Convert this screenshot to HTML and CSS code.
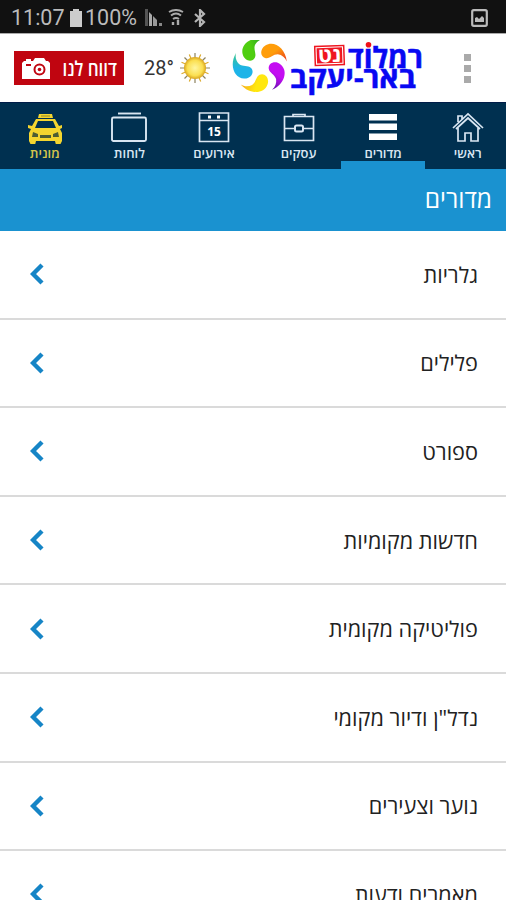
FILE: index.html
```
<!DOCTYPE html>
<html lang="he" dir="rtl">
<head>
  <meta charset="UTF-8" />
  <meta name="viewport" content="width=device-width, initial-scale=1.0"/>
  <title>מדורים</title>
  <link rel="stylesheet" href="styles.css">
</head>
<body>
  <!-- STATUS BAR -->
  <div class="status" dir="ltr">
    <span class="clock">11:07</span>
    <svg class="battery" width="12" height="18" viewBox="0 0 12 18"><path d="M3 0h6v2h3v16H0V2h3z" fill="#ccc"/></svg>
    <span class="percent">100%</span>
    <svg class="signal" width="18" height="17" viewBox="0 0 18 17">
      <path d="M0 0h3v17H0z" fill="#555"/>
      <path d="M4 3l3 3v11H4z" fill="#aaa"/>
      <path d="M8 7l4 4v6H8z" fill="#999"/>
      <path d="M14 14h3v3h-3z" fill="#888"/>
    </svg>
    <svg class="wifi" width="16" height="17" viewBox="0 0 16 17" fill="none" stroke="#aaa" stroke-width="2">
      <path d="M1 3q7-4 14 0M3 6.500q5-4 10 0M5 10q3-2 6 0"/>
      <path d="M5 13v3M10 11v5" stroke-width="2.400"/>
    </svg>
    <svg class="bluetooth" width="12" height="18" viewBox="0 0 12 18" fill="none" stroke="#b5b5b5" stroke-width="2.200"><path d="M1 5l9 8-4 4V1l4 4-9 8"/></svg>
    <svg class="shot" width="17" height="18" viewBox="0 0 17 18">
      <rect x="1.200" y="1.200" width="14.600" height="15.600" rx="1.500" fill="none" stroke="#bbb" stroke-width="2.200"/>
      <path d="M4 13V9l2-1 2 2 3-3 2 2v4z" fill="#bbb"/>
    </svg>
  </div>

  <!-- HEADER -->
  <header class="header" dir="ltr">
    <button class="report">
      <svg width="30" height="22" viewBox="0 0 30 22">
        <path d="M3 4h2V2h5v2h2l2-3h9l2 3h2l2 2v16H1V6z" fill="#fff"/>
        <circle cx="18.500" cy="12.500" r="5" fill="none" stroke="#c00510" stroke-width="2"/>
        <circle cx="18.500" cy="12.500" r="1.800" fill="#c00510"/>
        <path d="M5 7h5v2H5z" fill="#c00510"/>
      </svg>
      <span dir="rtl">דווח לנו</span>
    </button>
    <span class="temp">28°</span>
    <svg class="sun" width="32" height="32" viewBox="0 0 32 32">
      <defs>
        <radialGradient id="sunFill">
          <stop offset="0" stop-color="#fff6a0"/>
          <stop offset=".7" stop-color="#fbdf50"/>
          <stop offset="1" stop-color="#d9a520"/>
        </radialGradient>
      </defs>
      <g stroke="#8d8361" stroke-width="1.200">
        <path d="M16 1v30M1 16h30M5.500 5.500l21 21M5.500 26.500l21-21"/>
        <path d="M10.300 2.500l11.400 27M21.700 2.500l-11.400 27M2.500 10.300l27 11.400M2.500 21.700l27-11.400" stroke="#dba92c"/>
      </g>
      <circle cx="16" cy="16" r="11" fill="url(#sunFill)"/>
    </svg>
    <svg class="logo" width="194" height="56" viewBox="231 40 194 56">
      <defs>
        <path id="drop" d="M236 53C229 65 234 78 244 78.500C251 79 255 72 251 68C248 65 243 67 239 64C236 61 235 57 236 53Z"/>
        <linearGradient id="sky" x2="0" y2="1"><stop offset="0" stop-color="#39c68a"/><stop offset=".6" stop-color="#1eb4e8"/></linearGradient>
        <linearGradient id="leaf" x2="0" y2="1"><stop offset="0" stop-color="#259d2c"/><stop offset=".6" stop-color="#4fce10"/></linearGradient>
        <linearGradient id="flame" x2="0" y2="1"><stop offset="0" stop-color="#e8341c"/><stop offset=".6" stop-color="#ff9d0a"/></linearGradient>
        <linearGradient id="plum" x2="0" y2="1"><stop offset="0" stop-color="#5a12a8"/><stop offset=".6" stop-color="#c40df2"/></linearGradient>
        <linearGradient id="lemon" x2="0" y2="1"><stop offset="0" stop-color="#f6a81c"/><stop offset=".6" stop-color="#ffe70f"/></linearGradient>
      </defs>
      <use href="#drop" fill="url(#sky)"/>
      <use href="#drop" fill="url(#leaf)" transform="rotate(72 260 65.500)"/>
      <use href="#drop" fill="url(#flame)" transform="rotate(144 260 65.500)"/>
      <use href="#drop" fill="url(#plum)" transform="rotate(216 260 65.500)"/>
      <use href="#drop" fill="url(#lemon)" transform="rotate(288 260 65.500)"/>
      <g class="logo-text">
        <text x="423" y="67.500" textLength="75" lengthAdjust="spacingAndGlyphs">רמלוד</text>
        <text x="416" y="88" textLength="126" lengthAdjust="spacingAndGlyphs">באר-יעקב</text>
      </g>
      <circle cx="368.500" cy="44.800" r="2.800" fill="#f01018"/>
      <g transform="rotate(-2 329 55)">
        <rect x="315" y="46" width="29" height="19" fill="#fff" stroke="#ef1620" stroke-width="1.500"/>
        <rect x="316.800" y="47.800" width="25.400" height="15.400" fill="#ef1620"/>
        <text class="logo-net" x="341" y="62" textLength="23" lengthAdjust="spacingAndGlyphs">נט</text>
      </g>
    </svg>
    <div class="dots"><i></i><i></i><i></i></div>
  </header>

  <!-- TABS -->
  <nav class="tabs">
    <a class="tab">
      <svg width="36" height="34" viewBox="0 0 36 34" fill="none" stroke="#d9e6f2" stroke-width="1.700">
        <path d="M3 18L18 4l15 14M6 19L18 8l12 11M8 18v13h7v-8h6v8h7V18M8 12V6h4v3"/>
      </svg>
      <span>ראשי</span>
    </a>
    <a class="tab active">
      <svg width="36" height="34" viewBox="0 0 36 34" fill="#fff"><path d="M4 4h28v6.500H4zM4 13.500h28V20H4zM4 23.500h28V30H4z"/></svg>
      <span>מדורים</span>
    </a>
    <a class="tab">
      <svg width="36" height="34" viewBox="0 0 36 34" fill="none" stroke="#d9e6f2" stroke-width="1.700">
        <path d="M3.500 6.500h29v24h-29zM12 6.500V4.500h12v2M3.500 18.500H14M22 18.500h10.500"/>
        <rect x="14" y="15.500" width="8" height="6" rx="1.500" stroke-width="2"/>
      </svg>
      <span>עסקים</span>
    </a>
    <a class="tab">
      <svg width="36" height="34" viewBox="0 0 36 34" fill="none" stroke="#d9e6f2" stroke-width="1.700">
        <path d="M3.500 3h29v28.500h-29zM3.500 10.500h29"/>
        <path d="M12 7h3M21 7h3" stroke="#fff" stroke-width="3"/>
        <text class="day" x="18" y="25.500">15</text>
      </svg>
      <span>אירועים</span>
    </a>
    <a class="tab">
      <svg width="36" height="34" viewBox="0 0 36 34" fill="none" stroke="#d9e6f2" stroke-width="1.900">
        <rect x="1" y="7.500" width="34" height="23.500" rx="1.500"/>
        <path d="M7 3.500h23"/>
      </svg>
      <span>לוחות</span>
    </a>
    <a class="tab taxi">
      <svg width="36" height="34" viewBox="0 0 36 34">
        <path d="M12 4h13l1 4H11z" fill="#f4d52f"/>
        <path d="M14 6h9" stroke="#8a842f"/>
        <path d="M9 9h19l4 7 3-1v3l-2 1 2 4v8l-2 4h-4l-1-4H9l-1 4H4l-2-4v-8l2-4-3-1v-3l4 1z" fill="#f4d52f"/>
        <path d="M11 11h15l3 7H8z" fill="#003050"/>
        <path d="M6 22l5 2v3H5zM31 22l-5 2v3h6zM13 25h11v3H13z" fill="#4d5d33"/>
      </svg>
      <span>מונית</span>
    </a>
  </nav>

  <h1>מדורים</h1>

  <ul class="sections">
    <li><span>גלריות</span><svg width="14" height="22" viewBox="0 0 14 22"><path d="M12 2L3 11l9 9"/></svg></li>
    <li><span>פלילים</span><svg width="14" height="22" viewBox="0 0 14 22"><path d="M12 2L3 11l9 9"/></svg></li>
    <li><span>ספורט</span><svg width="14" height="22" viewBox="0 0 14 22"><path d="M12 2L3 11l9 9"/></svg></li>
    <li><span>חדשות מקומיות</span><svg width="14" height="22" viewBox="0 0 14 22"><path d="M12 2L3 11l9 9"/></svg></li>
    <li><span>פוליטיקה מקומית</span><svg width="14" height="22" viewBox="0 0 14 22"><path d="M12 2L3 11l9 9"/></svg></li>
    <li><span>נדל"ן ודיור מקומי</span><svg width="14" height="22" viewBox="0 0 14 22"><path d="M12 2L3 11l9 9"/></svg></li>
    <li><span>נוער וצעירים</span><svg width="14" height="22" viewBox="0 0 14 22"><path d="M12 2L3 11l9 9"/></svg></li>
    <li><span>מאמרים ודעות</span><svg width="14" height="22" viewBox="0 0 14 22"><path d="M12 2L3 11l9 9"/></svg></li>
  </ul>
</body>
</html>
```
FILE: styles.css
```
:root {
  --navy: #003050;
  --blue: #1a92d0;
  --red: #c00510;
  --line: #dadada;
}

* {
  margin: 0;
  padding: 0;
  box-sizing: border-box;
}

body {
  height: 900px;
  overflow: hidden;
  background: #fff;
  font-family: 'Open Sans', 'Noto Sans', sans-serif;
}

svg {
  display: block;
  flex: none;
}

.status {
  height: 34px;
  padding: 2px 18px 0 11px;
  display: flex;
  align-items: center;
  background: #111;
  color: #bbb;
  border-bottom: 1px solid #aaa;
  font: 21.5px/32px Roboto, sans-serif;
}

.clock {
  width: 59px;
}

.percent {
  width: 60px;
  margin-left: 3px;
}

.wifi {
  margin-left: 5px;
}

.bluetooth {
  margin-left: 10px;
}

.shot {
  margin-left: auto;
}

.header {
  height: 68px;
  padding-left: 14px;
  display: flex;
  align-items: center;
}

.report {
  width: 110px;
  height: 34px;
  padding: 0 7px;
  display: flex;
  align-items: center;
  justify-content: space-between;
  border: 0;
  background: var(--red);
  color: #fff;
  font: 600 17px 'Open Sans', sans-serif;
  white-space: nowrap;
}

.report span {
  transform: scaleY(1.2);
}

.temp {
  width: 35px;
  margin-left: 20px;
  font: 20px Roboto, sans-serif;
  color: #333;
}

.logo {
  margin-left: 20px;
}

.logo-text {
  font: 700 29px 'Open Sans', sans-serif;
  fill: #0808f2;
  stroke: #0808f2;
  stroke-width: .5;
  direction: rtl;
}

.logo-net {
  font: 700 20px 'Open Sans', sans-serif;
  fill: #fff;
  direction: rtl;
}

.dots {
  margin-left: 39px;
  display: grid;
  gap: 4px;
}

.dots i {
  width: 7px;
  height: 7px;
  background: #aaa;
}

.tabs {
  height: 67px;
  margin-right: -4px;
  display: flex;
  background: var(--navy);
  border-top: 1px solid #001c48;
}

.tab {
  width: 84.6px;
  flex: none;
  padding-top: 7px;
  display: flex;
  flex-direction: column;
  align-items: center;
  color: #d9e6f2;
  font-size: 13px;
  font-weight: 600;
  line-height: 18px;
}

.active {
  border-bottom: 8px solid var(--blue);
}

.taxi {
  color: #d5c64c;
}

.day {
  font: 700 12px 'Open Sans', sans-serif;
  fill: #fff;
  stroke: none;
  text-anchor: middle;
  direction: ltr;
}

h1 {
  height: 62px;
  padding: 0 14px;
  background: var(--blue);
  color: #fff;
  font-size: 24.5px;
  font-weight: 400;
  line-height: 60px;
}

.sections {
  list-style: none;
}

.sections li {
  height: 88.6px;
  padding: 0 28px 0 30px;
  display: flex;
  align-items: center;
  justify-content: space-between;
  border-bottom: 2px solid var(--line);
  color: #222;
  font-size: 21.7px;
}

.sections svg {
  fill: none;
  stroke: #1685c6;
  stroke-width: 4.4;
}
```
